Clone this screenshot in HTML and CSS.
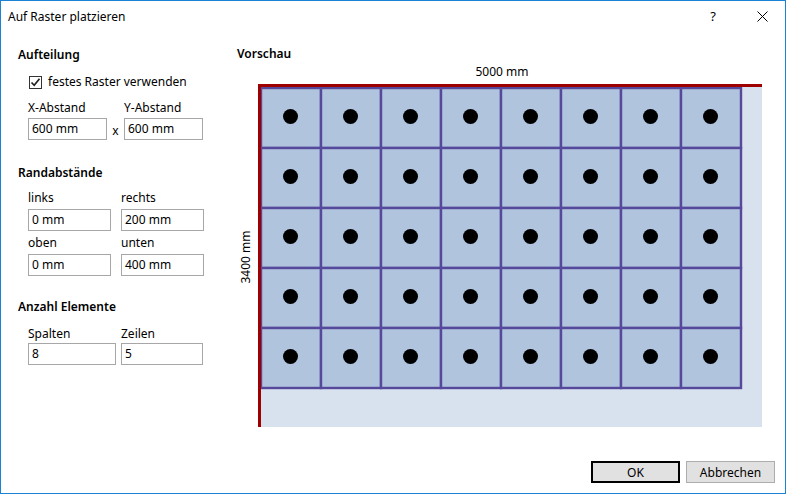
FILE: index.html
```html
<!DOCTYPE html>
<html lang="de">
<head>
<meta charset="utf-8">
<title>Auf Raster platzieren</title>
<link rel="stylesheet" href="styles.css">
</head>
<body>
<div class="window">
  <div class="titlebar">
    <span class="title">Auf Raster platzieren</span>
    <span class="help">?</span>
    <svg class="close" width="11" height="11" viewBox="0 0 11 11"><path d="M0.5 0.5 L10.5 10.5 M10.5 0.5 L0.5 10.5" stroke="#000" stroke-width="1" fill="none"/></svg>
  </div>
  <div class="content">
    <div class="left">
      <div class="head h1">Aufteilung</div>
      <label class="check">
        <span class="box"><svg width="11" height="11" viewBox="0 0 11 11"><path d="M1.5 5.5 L4.2 8.3 L9.5 1.8" stroke="#222" stroke-width="1.7" fill="none"/></svg></span>
        <span>festes Raster verwenden</span>
      </label>
      <div class="fields f1">
        <span class="lbl">X-Abstand</span><span></span><span class="lbl">Y-Abstand</span>
        <div class="input w79">600 mm</div><span class="times">x</span><div class="input w79">600 mm</div>
      </div>
      <div class="head h2">Randabstände</div>
      <div class="fields f2">
        <span class="lbl">links</span><span class="lbl">rechts</span>
        <div class="input">0 mm</div><div class="input">200 mm</div>
        <span class="lbl l2">oben</span><span class="lbl l2">unten</span>
        <div class="input">0 mm</div><div class="input">400 mm</div>
      </div>
      <div class="head h3">Anzahl Elemente</div>
      <div class="fields f3">
        <span class="lbl">Spalten</span><span class="lbl">Zeilen</span>
        <div class="input">8</div><div class="input">5</div>
      </div>
    </div>
    <div class="right">
      <div class="head">Vorschau</div>
      <svg class="preview" width="525" height="370" viewBox="237 62 525 370">
        <text class="dim" x="502" y="76" text-anchor="middle">5000 mm</text>
        <text class="dim" x="0" y="0" text-anchor="middle" transform="translate(250 257) rotate(-90)">3400 mm</text>
        <rect x="258" y="84" width="504" height="343" fill="#d8e2ee"/>
        <g id="cells"></g>
        <rect x="258" y="84" width="504" height="3" fill="#9e0000"/>
        <rect x="258" y="84" width="3" height="343" fill="#9e0000"/>
      </svg>
    </div>
  </div>
  <div class="footer">
    <div class="btn default">OK</div>
    <div class="btn">Abbrechen</div>
  </div>
</div>
<script src="script.js"></script>
</body>
</html>
```
FILE: script.js
```js
(function () {
  var g = document.getElementById('cells');
  var ns = 'http://www.w3.org/2000/svg';
  var cols = 8, rows = 5;
  for (var j = 0; j < rows; j++) {
    for (var i = 0; i < cols; i++) {
      var x = 261 + i * 60, y = 88 + j * 60;
      var r = document.createElementNS(ns, 'rect');
      r.setAttribute('x', x);
      r.setAttribute('y', y);
      r.setAttribute('width', 60);
      r.setAttribute('height', 60);
      r.setAttribute('fill', '#b0c4de');
      r.setAttribute('stroke', '#56499c');
      r.setAttribute('stroke-width', '2.4');
      g.appendChild(r);
    }
  }
  for (var j2 = 0; j2 < rows; j2++) {
    for (var i2 = 0; i2 < cols; i2++) {
      var c = document.createElementNS(ns, 'circle');
      c.setAttribute('cx', 290.5 + i2 * 60);
      c.setAttribute('cy', 116.5 + j2 * 60);
      c.setAttribute('r', 7.5);
      c.setAttribute('fill', '#000');
      g.appendChild(c);
    }
  }
})();
```
FILE: styles.css
```css
html, body {
  margin: 0;
  padding: 0;
  background: #ffffff;
}
body {
  font-family: "Noto Sans", "Open Sans", sans-serif;
  font-size: 12px;
  color: #000;
}
.window {
  box-sizing: border-box;
  width: 786px;
  height: 494px;
  border: 1px solid #1a83d6;
  background: #fff;
  display: flex;
  flex-direction: column;
}
.titlebar {
  height: 30px;
  display: flex;
  align-items: center;
  padding-left: 7px;
  padding-right: 17px;
}
.title {
  flex: 1;
  font-size: 12px;
}
.help {
  font-size: 13px;
  margin-right: 41px;
}
.close {
  display: block;
}
.content {
  display: flex;
}
.left {
  width: 235px;
  padding-left: 17px;
  box-sizing: border-box;
}
.head {
  font-weight: 600;
  line-height: 16px;
}
.h1 { margin-top: 16px; }
.h2 { margin-top: 25px; }
.h3 { margin-top: 23px; }
.lbl {
  line-height: 16px;
  display: block;
}
.check {
  display: flex;
  align-items: center;
  margin-top: 11px;
  margin-left: 11px;
  line-height: 16px;
}
.box {
  box-sizing: border-box;
  width: 13px;
  height: 13px;
  border: 1px solid #333;
  display: flex;
  align-items: center;
  justify-content: center;
  margin-right: 6px;
}
.box svg { display: block; }
.fields {
  display: grid;
  margin-left: 10px;
}
.f1 {
  margin-top: 10px;
  grid-template-columns: 79px 17px 79px;
  row-gap: 2px;
}
.f2 {
  margin-top: 9px;
  grid-template-columns: 83px 83px;
  column-gap: 10px;
  row-gap: 3px;
}
.f2 .l2 { margin-top: 1px; }
.f3 {
  margin-top: 11px;
  grid-template-columns: 88px 82px;
  column-gap: 5px;
  row-gap: 1px;
}
.input {
  box-sizing: border-box;
  height: 22px;
  border: 1px solid #a7a7a7;
  padding-left: 3px;
  line-height: 20px;
  background: #fff;
}
.times {
  align-self: end;
  text-align: center;
  line-height: 16px;
  margin-bottom: 1px;
}
.right {
  padding-left: 1px;
  padding-top: 15px;
}
.preview {
  display: block;
}
.dim {
  font-family: "Noto Sans", "Open Sans", sans-serif;
  font-size: 12px;
  fill: #000;
}
.footer {
  margin-top: auto;
  display: flex;
  justify-content: flex-end;
  gap: 6px;
  padding-right: 10px;
  padding-bottom: 10px;
}
.btn {
  box-sizing: border-box;
  width: 89px;
  height: 22px;
  background: #e1e1e1;
  border: 1px solid #adadad;
  display: flex;
  align-items: center;
  justify-content: center;
}
.btn.default {
  border: 2px solid #000;
}
```
